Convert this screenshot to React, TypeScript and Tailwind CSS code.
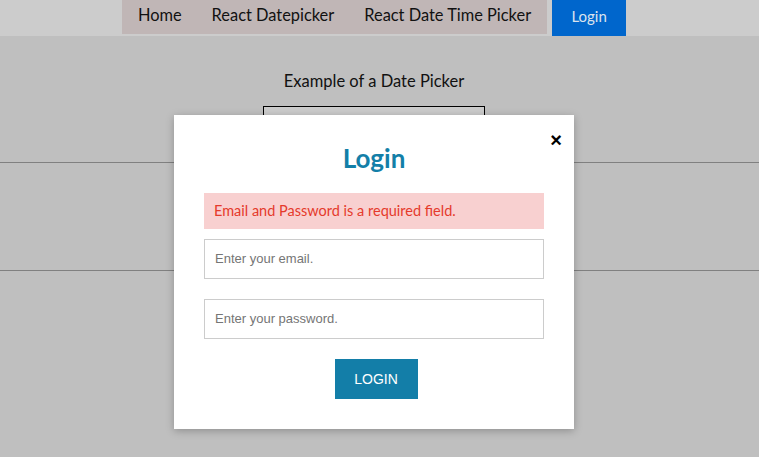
import React from "react";

const ubuntu = { fontFamily: "Lato, 'Open Sans', sans-serif" };
const arial = { fontFamily: "'Liberation Sans', Arial, sans-serif" };

export default function App() {
  return (
    <div className="relative min-h-screen w-full bg-[#bfbfbf] overflow-hidden" style={ubuntu}>
      {/* header */}
      <div className="h-[36px] w-full bg-[#cccccc]">
        <div className="w-[748px] flex justify-center items-start gap-[5px]">
          <nav className="flex h-[34px] items-center bg-[#c0b6b6] px-[1px] pb-[3px]">
            {["Home", "React Datepicker", "React Date Time Picker"].map((t) => (
              <a key={t} className="px-[15px] text-[16.4px] text-[#111] cursor-pointer">
                {t}
              </a>
            ))}
          </nav>
          <button className="h-[36px] w-[74px] bg-[#0066cc] pb-[3px] text-[15px] text-[#dbe3ee]">Login</button>
        </div>
      </div>

      {/* page content */}
      <div className="w-[748px] flex flex-col items-center">
        <h2 className="mt-[34px] text-[16.5px] text-[#111] leading-[22px]">Example of a Date Picker</h2>
        <div className="mt-[14px] h-[40px] w-[222px] border border-black bg-[#cbcbcb]" />
      </div>
      <div className="mt-[16px] h-px w-full bg-[#808080]" />
      <div className="mt-[107px] h-px w-full bg-[#808080]" />

      {/* modal overlay */}
      <div className="absolute inset-0">
        <div className="w-[748px] flex justify-center pt-[115px]">
          <div className="relative w-[400px] bg-white px-[30px] pt-[27px] pb-[30px] shadow-[0_2px_8px_rgba(0,0,0,0.25)]">
            <button className="absolute right-[12px] top-[15px] text-[20px] font-bold leading-none text-black" style={arial}>
              ×
            </button>
            <h1 className="text-center text-[26px] font-bold leading-[32px] text-[#137fa8]">Login</h1>
            <div className="mt-[19px] flex h-[36px] items-center bg-[#f8d0d0] px-[10px] text-[14.5px] text-[#e53a2b]">
              Email and Password is a required field.
            </div>
            <input
              className="mt-[10px] block h-[40px] w-full border border-[#cccccc] px-[10px] pb-[2px] text-[13px] outline-none placeholder:text-[#757575]"
              style={arial}
              placeholder="Enter your email."
            />
            <input
              type="password"
              className="mt-[20px] block h-[40px] w-full border border-[#cccccc] px-[10px] pb-[2px] text-[13px] outline-none placeholder:text-[#757575]"
              style={arial}
              placeholder="Enter your password."
            />
            <div className="mt-[20px] flex justify-center pl-[4px]">
              <button className="h-[40px] w-[83px] bg-[#137ea8] text-[14px] text-white" style={arial}>
                LOGIN
              </button>
            </div>
          </div>
        </div>
      </div>
    </div>
  );
}
